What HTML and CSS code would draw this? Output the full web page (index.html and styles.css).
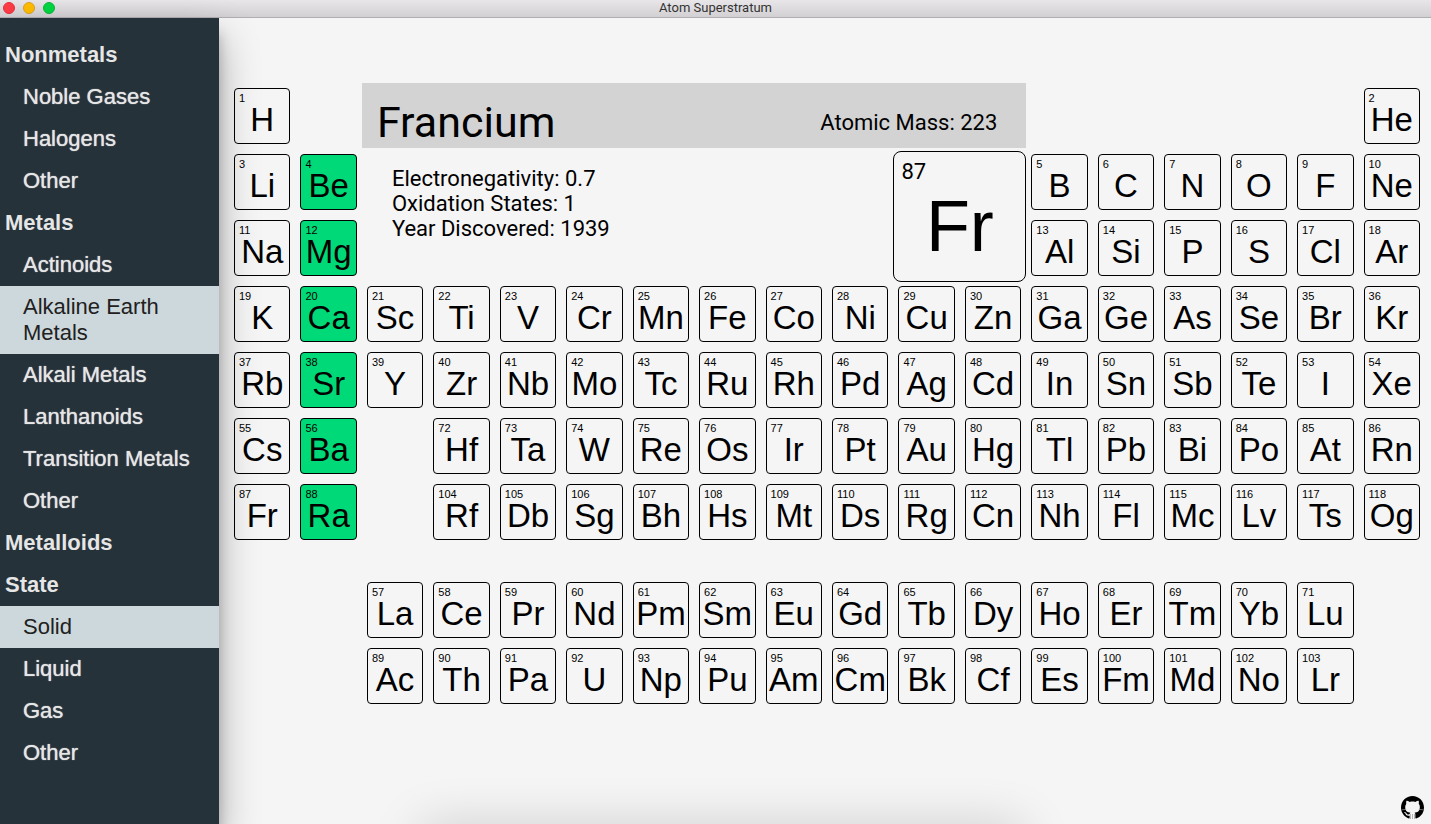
FILE: index.html
```html
<!DOCTYPE html>
<html lang="en">
<head>
<meta charset="utf-8">
<title>Atom Superstratum</title>
<link rel="stylesheet" href="styles.css">
</head>
<body>
<header class="titlebar">
  <div class="lights">
    <button class="light close" aria-label="Close"></button>
    <button class="light minimize" aria-label="Minimize"></button>
    <button class="light zoom" aria-label="Zoom"></button>
  </div>
  <h1 class="window-title">Atom Superstratum</h1>
</header>
<div class="app">
  <nav class="sidebar" aria-label="Element groups">
    <button class="group">Nonmetals</button>
    <button class="item">Noble Gases</button>
    <button class="item">Halogens</button>
    <button class="item">Other</button>
    <button class="group">Metals</button>
    <button class="item">Actinoids</button>
    <button class="item selected" aria-pressed="true">Alkaline Earth Metals</button>
    <button class="item">Alkali Metals</button>
    <button class="item">Lanthanoids</button>
    <button class="item">Transition Metals</button>
    <button class="item">Other</button>
    <button class="group">Metalloids</button>
    <button class="group">State</button>
    <button class="item selected" aria-pressed="true">Solid</button>
    <button class="item">Liquid</button>
    <button class="item">Gas</button>
    <button class="item">Other</button>
  </nav>
  <main class="main">
    <div class="table">
      <section class="info">
        <div class="info-head">
          <h2 class="info-name">Francium</h2>
          <p class="info-mass">Atomic Mass: 223</p>
        </div>
        <div class="info-body">
          <ul class="facts">
            <li>Electronegativity: 0.7</li>
            <li>Oxidation States: 1</li>
            <li>Year Discovered: 1939</li>
          </ul>
          <div class="card">
            <span class="card-number">87</span>
            <span class="card-symbol">Fr</span>
          </div>
        </div>
      </section>

      <button class="el c1"><span class="n">1</span>H</button>
      <button class="el c18"><span class="n">2</span>He</button>

      <button class="el c1"><span class="n">3</span>Li</button>
      <button class="el c2 on"><span class="n">4</span>Be</button>
      <button class="el c13"><span class="n">5</span>B</button>
      <button class="el"><span class="n">6</span>C</button>
      <button class="el"><span class="n">7</span>N</button>
      <button class="el"><span class="n">8</span>O</button>
      <button class="el"><span class="n">9</span>F</button>
      <button class="el"><span class="n">10</span>Ne</button>

      <button class="el c1"><span class="n">11</span>Na</button>
      <button class="el c2 on"><span class="n">12</span>Mg</button>
      <button class="el c13"><span class="n">13</span>Al</button>
      <button class="el"><span class="n">14</span>Si</button>
      <button class="el"><span class="n">15</span>P</button>
      <button class="el"><span class="n">16</span>S</button>
      <button class="el"><span class="n">17</span>Cl</button>
      <button class="el"><span class="n">18</span>Ar</button>

      <button class="el c1"><span class="n">19</span>K</button>
      <button class="el on"><span class="n">20</span>Ca</button>
      <button class="el"><span class="n">21</span>Sc</button>
      <button class="el"><span class="n">22</span>Ti</button>
      <button class="el"><span class="n">23</span>V</button>
      <button class="el"><span class="n">24</span>Cr</button>
      <button class="el"><span class="n">25</span>Mn</button>
      <button class="el"><span class="n">26</span>Fe</button>
      <button class="el"><span class="n">27</span>Co</button>
      <button class="el"><span class="n">28</span>Ni</button>
      <button class="el"><span class="n">29</span>Cu</button>
      <button class="el"><span class="n">30</span>Zn</button>
      <button class="el"><span class="n">31</span>Ga</button>
      <button class="el"><span class="n">32</span>Ge</button>
      <button class="el"><span class="n">33</span>As</button>
      <button class="el"><span class="n">34</span>Se</button>
      <button class="el"><span class="n">35</span>Br</button>
      <button class="el"><span class="n">36</span>Kr</button>

      <button class="el c1"><span class="n">37</span>Rb</button>
      <button class="el on"><span class="n">38</span>Sr</button>
      <button class="el"><span class="n">39</span>Y</button>
      <button class="el"><span class="n">40</span>Zr</button>
      <button class="el"><span class="n">41</span>Nb</button>
      <button class="el"><span class="n">42</span>Mo</button>
      <button class="el"><span class="n">43</span>Tc</button>
      <button class="el"><span class="n">44</span>Ru</button>
      <button class="el"><span class="n">45</span>Rh</button>
      <button class="el"><span class="n">46</span>Pd</button>
      <button class="el"><span class="n">47</span>Ag</button>
      <button class="el"><span class="n">48</span>Cd</button>
      <button class="el"><span class="n">49</span>In</button>
      <button class="el"><span class="n">50</span>Sn</button>
      <button class="el"><span class="n">51</span>Sb</button>
      <button class="el"><span class="n">52</span>Te</button>
      <button class="el"><span class="n">53</span>I</button>
      <button class="el"><span class="n">54</span>Xe</button>

      <button class="el c1"><span class="n">55</span>Cs</button>
      <button class="el on"><span class="n">56</span>Ba</button>
      <button class="el c4"><span class="n">72</span>Hf</button>
      <button class="el"><span class="n">73</span>Ta</button>
      <button class="el"><span class="n">74</span>W</button>
      <button class="el"><span class="n">75</span>Re</button>
      <button class="el"><span class="n">76</span>Os</button>
      <button class="el"><span class="n">77</span>Ir</button>
      <button class="el"><span class="n">78</span>Pt</button>
      <button class="el"><span class="n">79</span>Au</button>
      <button class="el"><span class="n">80</span>Hg</button>
      <button class="el"><span class="n">81</span>Tl</button>
      <button class="el"><span class="n">82</span>Pb</button>
      <button class="el"><span class="n">83</span>Bi</button>
      <button class="el"><span class="n">84</span>Po</button>
      <button class="el"><span class="n">85</span>At</button>
      <button class="el"><span class="n">86</span>Rn</button>

      <button class="el c1"><span class="n">87</span>Fr</button>
      <button class="el on"><span class="n">88</span>Ra</button>
      <button class="el c4"><span class="n">104</span>Rf</button>
      <button class="el"><span class="n">105</span>Db</button>
      <button class="el"><span class="n">106</span>Sg</button>
      <button class="el"><span class="n">107</span>Bh</button>
      <button class="el"><span class="n">108</span>Hs</button>
      <button class="el"><span class="n">109</span>Mt</button>
      <button class="el"><span class="n">110</span>Ds</button>
      <button class="el"><span class="n">111</span>Rg</button>
      <button class="el"><span class="n">112</span>Cn</button>
      <button class="el"><span class="n">113</span>Nh</button>
      <button class="el"><span class="n">114</span>Fl</button>
      <button class="el"><span class="n">115</span>Mc</button>
      <button class="el"><span class="n">116</span>Lv</button>
      <button class="el"><span class="n">117</span>Ts</button>
      <button class="el"><span class="n">118</span>Og</button>

      <div class="break"></div>

      <button class="el c3"><span class="n">57</span>La</button>
      <button class="el"><span class="n">58</span>Ce</button>
      <button class="el"><span class="n">59</span>Pr</button>
      <button class="el"><span class="n">60</span>Nd</button>
      <button class="el"><span class="n">61</span>Pm</button>
      <button class="el"><span class="n">62</span>Sm</button>
      <button class="el"><span class="n">63</span>Eu</button>
      <button class="el"><span class="n">64</span>Gd</button>
      <button class="el"><span class="n">65</span>Tb</button>
      <button class="el"><span class="n">66</span>Dy</button>
      <button class="el"><span class="n">67</span>Ho</button>
      <button class="el"><span class="n">68</span>Er</button>
      <button class="el"><span class="n">69</span>Tm</button>
      <button class="el"><span class="n">70</span>Yb</button>
      <button class="el"><span class="n">71</span>Lu</button>

      <button class="el c3"><span class="n">89</span>Ac</button>
      <button class="el"><span class="n">90</span>Th</button>
      <button class="el"><span class="n">91</span>Pa</button>
      <button class="el"><span class="n">92</span>U</button>
      <button class="el"><span class="n">93</span>Np</button>
      <button class="el"><span class="n">94</span>Pu</button>
      <button class="el"><span class="n">95</span>Am</button>
      <button class="el"><span class="n">96</span>Cm</button>
      <button class="el"><span class="n">97</span>Bk</button>
      <button class="el"><span class="n">98</span>Cf</button>
      <button class="el"><span class="n">99</span>Es</button>
      <button class="el"><span class="n">100</span>Fm</button>
      <button class="el"><span class="n">101</span>Md</button>
      <button class="el"><span class="n">102</span>No</button>
      <button class="el"><span class="n">103</span>Lr</button>
    </div>
    <footer class="footer">
      <a class="github" href="#" aria-label="GitHub">
        <svg viewBox="0 0 16 16" width="23" height="23" aria-hidden="true">
          <path d="M8 0C3.58 0 0 3.58 0 8c0 3.54 2.29 6.53 5.47 7.59.4.07.55-.17.55-.38 0-.19-.01-.82-.01-1.49-2.01.37-2.53-.49-2.69-.94-.09-.23-.48-.94-.82-1.13-.28-.15-.68-.52-.01-.53.63-.01 1.08.58 1.23.82.72 1.21 1.87.87 2.33.66.07-.52.28-.87.51-1.07-1.78-.2-3.64-.89-3.64-3.95 0-.87.31-1.59.82-2.15-.08-.2-.36-1.02.08-2.12 0 0 .67-.21 2.2.82.64-.18 1.32-.27 2-.27s1.36.09 2 .27c1.53-1.04 2.2-.82 2.2-.82.44 1.1.16 1.92.08 2.12.51.56.82 1.27.82 2.15 0 3.07-1.87 3.75-3.65 3.95.29.25.54.73.54 1.48 0 1.07-.01 1.93-.01 2.2 0 .21.15.46.55.38A8.01 8.01 0 0 0 16 8c0-4.42-3.58-8-8-8z"/>
          <path d="M6.6 12.5V16M8 12.5V16M9.4 12.5V16" stroke="#aaa" stroke-width=".6"/>
          <path d="M.6 9.6l3.2-.3M15.4 9.6l-3.2-.3" stroke="#bbb" stroke-width=".4"/>
        </svg>
      </a>
    </footer>
    <div class="glow"></div>
  </main>
</div>
</body>
</html>
```
FILE: styles.css
```css
* {
  box-sizing: border-box;
}

body {
  margin: 0;
  min-height: 100vh;
  display: flex;
  flex-direction: column;
  background: #f5f5f5;
  color: #000;
  font-family: "Liberation Sans", Arial, sans-serif;
}

button {
  margin: 0;
  padding: 0;
  border: 0;
  background: none;
  color: inherit;
  font: inherit;
  cursor: pointer;
}

/* Window title bar */
.titlebar {
  display: grid;
  grid-template-columns: 1fr auto 1fr;
  align-items: center;
  height: 18px;
  padding: 0 3px 2px;
  border-bottom: 1px solid #b1aeb1;
  background: linear-gradient(#e8e6e8, #d3d0d3);
}

.lights {
  display: flex;
  gap: 8px;
}

.light {
  width: 12px;
  height: 12px;
  border: 1px solid;
  border-radius: 50%;
}

.close {
  background: #ff3b47;
  border-color: #e2323c;
}

.minimize {
  background: #ffbd00;
  border-color: #dfa023;
}

.zoom {
  background: #00d742;
  border-color: #12b23a;
}

.window-title {
  margin: 0;
  color: #333;
  font: 400 13px/15px Roboto, sans-serif;
}

.app {
  flex: 1;
  display: flex;
}

/* Sidebar */
.sidebar {
  flex: 0 0 219px;
  display: flex;
  flex-direction: column;
  padding: 16px 0;
  background: #253239;
  color: #e6e6e6;
  font-size: 22px;
  line-height: 26px;
  box-shadow: 0 19px 38px rgba(0, 0, 0, .3), 0 15px 12px rgba(0, 0, 0, .22);
}

.group,
.item {
  padding: 8px 5px;
  text-align: left;
}

.group {
  font-weight: 700;
}

.item {
  padding: 8px 23px;
  text-shadow: 0 0 1px #e6e6e6;
}

.selected {
  background: #cdd8dc;
  color: #212121;
  text-shadow: none;
}

/* Periodic table */
.main {
  flex: 1;
  min-width: 0;
  position: relative;
  z-index: -1;
  display: flex;
  flex-direction: column;
  justify-content: space-between;
  overflow: hidden;
}

.table {
  display: grid;
  grid-template-columns: repeat(18, minmax(0, 1fr));
  grid-template-rows: repeat(7, 56px) 22px repeat(2, 56px);
  gap: 10px;
  padding: 70px 11px 0 15px;
}

.el {
  position: relative;
  padding-top: 8px;
  border: 1px solid #000;
  border-radius: 4px;
  font-size: 33px;
  line-height: 46px;
}

.on {
  background: #00d977;
}

.n {
  position: absolute;
  top: 3px;
  left: 4px;
  font-size: 11px;
  line-height: 12px;
}

/* Empty row above the lanthanoids and actinoids */
.break {
  grid-column: 1 / -1;
}

.c1 { grid-column: 1; }
.c2 { grid-column: 2; }
.c3 { grid-column: 3; }
.c4 { grid-column: 4; }
.c13 { grid-column: 13; }
.c18 { grid-column: 18; }

/* Details of the hovered element */
.info {
  grid-area: 1 / 3 / 4 / 13;
  display: flex;
  flex-direction: column;
  gap: 3px;
  margin: -5px -5px -6px;
  font-family: Roboto, sans-serif;
  font-size: 22px;
  line-height: 25px;
}

.info-head {
  display: flex;
  justify-content: space-between;
  align-items: center;
  height: 65px;
  padding: 13px 29px 0 15px;
  background: #d3d3d3;
}

.info-name,
.info-mass {
  margin: 0;
  font-weight: 400;
}

.info-name {
  font-size: 43px;
  line-height: 48px;
}

.info-body {
  flex: 1;
  display: flex;
  justify-content: space-between;
}

.facts {
  margin: 0;
  padding: 15px 0 0 30px;
  list-style: none;
}

.card {
  display: flex;
  flex-direction: column;
  width: 20%;
  padding: 7px;
  border: 1px solid #000;
  border-radius: 8px;
}

.card-symbol {
  text-align: center;
  font-family: "Liberation Sans", Arial, sans-serif;
  font-size: 72px;
  line-height: 84px;
}

.footer {
  display: flex;
  justify-content: flex-end;
  padding: 0 7px 5px;
}

.github {
  display: flex;
}

/* Soft shade along the bottom edge */
.glow {
  position: absolute;
  bottom: -30px;
  left: 17%;
  right: 34%;
  height: 20px;
  border-radius: 10px;
  box-shadow: 0 0 50px 8px rgba(0, 0, 0, .18);
  pointer-events: none;
}
```
